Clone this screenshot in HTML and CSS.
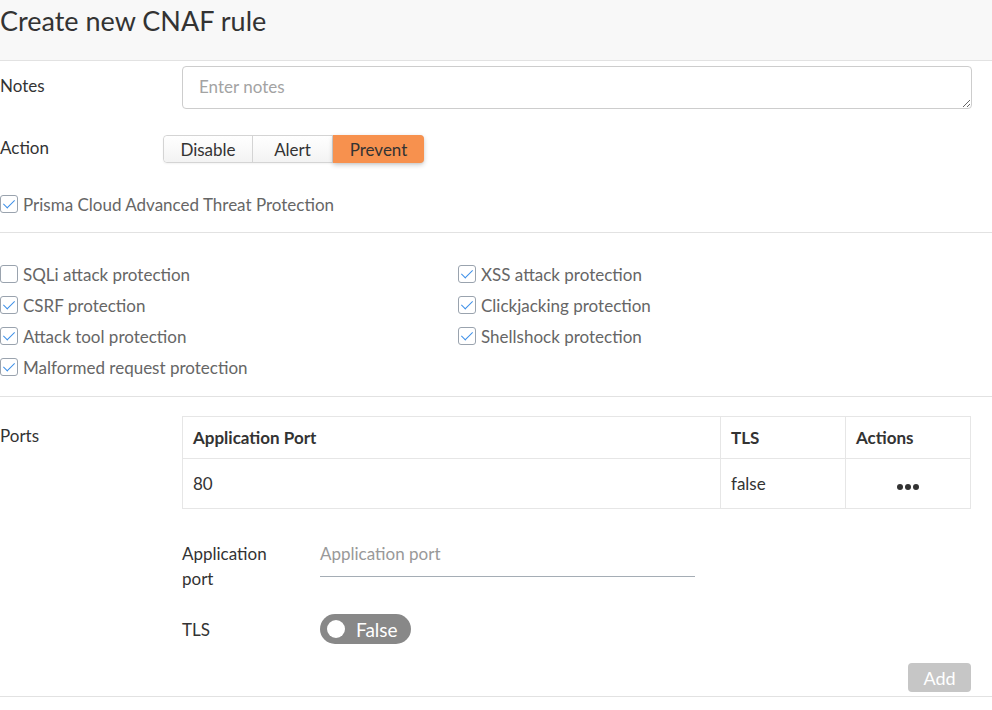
FILE: index.html
```html
<!DOCTYPE html>
<html>
<head>
<meta charset="utf-8">
<link rel="stylesheet" href="styles.css">
</head>
<body>
<div class="header"><h1 class="title">Create new CNAF rule</h1></div>

<div class="row row-notes">
  <div class="label">Notes</div>
  <div class="field"><textarea class="notes" placeholder="Enter notes"></textarea></div>
</div>

<div class="row row-action">
  <div class="label label-action">Action</div>
  <div class="btn-group">
    <span class="seg">Disable</span><span class="seg">Alert</span><span class="seg seg-active">Prevent</span>
  </div>
</div>

<div class="check-line check-prisma">
  <span class="cb on"></span><span class="cb-text">Prisma Cloud Advanced Threat Protection</span>
</div>

<div class="divider"></div>

<div class="check-grid">
  <div class="check-line"><span class="cb"></span><span class="cb-text">SQLi attack protection</span></div>
  <div class="check-line"><span class="cb on"></span><span class="cb-text">XSS attack protection</span></div>
  <div class="check-line"><span class="cb on"></span><span class="cb-text">CSRF protection</span></div>
  <div class="check-line"><span class="cb on"></span><span class="cb-text">Clickjacking protection</span></div>
  <div class="check-line"><span class="cb on"></span><span class="cb-text">Attack tool protection</span></div>
  <div class="check-line"><span class="cb on"></span><span class="cb-text">Shellshock protection</span></div>
  <div class="check-line"><span class="cb on"></span><span class="cb-text">Malformed request protection</span></div>
</div>

<div class="divider"></div>

<div class="ports">
  <div class="label label-ports">Ports</div>
  <div class="ports-body">
    <table class="ports-table">
      <thead>
        <tr><th class="c1">Application Port</th><th class="c2">TLS</th><th class="c3">Actions</th></tr>
      </thead>
      <tbody>
        <tr><td>80</td><td>false</td><td class="dots"><span></span><span></span><span></span></td></tr>
      </tbody>
    </table>

    <div class="sub-row sub-port">
      <div class="sub-label">Application<br>port</div>
      <div class="port-input"><span class="ph">Application port</span></div>
    </div>
    <div class="sub-row sub-tls">
      <div class="sub-label">TLS</div>
      <div class="toggle"><span class="knob"></span><span class="toggle-text">False</span></div>
    </div>
    <div class="add-row"><span class="add-btn">Add</span></div>
  </div>
</div>
<div class="divider last"></div>
</body>
</html>
```

FILE: styles.css
```css
html, body {
  margin: 0;
  padding: 0;
  background: #fff;
  font-family: Lato, "Open Sans", sans-serif;
  color: #333;
}
.header {
  height: 60px;
  background: #f8f8f8;
  border-bottom: 1px solid #e2e2e2;
  overflow: hidden;
}
.title {
  margin: 0;
  padding-top: 5px;
  font-size: 27px;
  font-weight: 400;
  color: #333;
  line-height: 32px;
}
.row {
  display: flex;
  align-items: flex-start;
}
.label {
  width: 182px;
  font-size: 17px;
  line-height: 20px;
  color: #333;
}
.row-notes {
  padding-top: 5px;
}
.row-notes .label {
  padding-top: 10px;
}
.field {
  width: 790px;
}
.notes {
  display: block;
  box-sizing: border-box;
  width: 790px;
  height: 43px;
  margin: 0;
  padding: 10px 16px;
  border: 1px solid #cdcdcd;
  border-radius: 4px;
  font-family: Lato, sans-serif;
  font-size: 17px;
  line-height: 20px;
  color: #333;
  resize: vertical;
}
.notes::placeholder {
  color: #a3a3a3;
}
.row-action {
  margin-top: 26px;
  align-items: center;
}
.label-action {
  width: 163px;
  margin-top: -2px;
}
.btn-group {
  display: flex;
  height: 28px;
  border-radius: 4px;
  border: 1px solid #d4d4d4;
  box-sizing: border-box;
  box-shadow: 0 1px 2px rgba(0,0,0,0.05);
}
.seg {
  display: flex;
  align-items: center;
  justify-content: center;
  font-size: 17px;
  color: #333;
  background: linear-gradient(#fff, #f3f3f3);
  border-right: 1px solid #d4d4d4;
}
.seg:nth-child(1) { width: 88px; border-radius: 4px 0 0 4px; }
.seg:nth-child(2) { width: 79px; }
.seg-active {
  width: 91px;
  border-right: 0;
  margin: -1px -1px -1px 0;
  border-radius: 0 4px 4px 0;
  background: #f7914e;
  box-shadow: 0 2px 5px rgba(0,0,0,0.2);
  color: #333;
}
.check-line {
  display: flex;
  align-items: center;
  height: 20px;
}
.check-prisma {
  margin-top: 31px;
}
.cb {
  box-sizing: border-box;
  width: 18px;
  height: 18px;
  border: 1px solid #9aa3ae;
  border-radius: 3px;
  margin-right: 5px;
  position: relative;
  flex: none;
}
.cb.on::after {
  content: "";
  position: absolute;
  left: 5px;
  top: 1px;
  width: 5px;
  height: 10px;
  border: solid #3d8fe8;
  border-width: 0 1.5px 1.5px 0;
  transform: rotate(45deg);
}
.cb-text {
  font-size: 17px;
  color: #666;
}
.divider {
  height: 1px;
  background: #e2e2e2;
  margin-top: 18px;
}
.check-grid {
  display: grid;
  grid-template-columns: 458px 1fr;
  row-gap: 11px;
  padding-top: 31px;
}
.check-grid .check-line {
  height: 20px;
}
.check-grid + .divider {
  margin-top: 19px;
}
.ports {
  display: flex;
  padding-top: 19px;
}
.label-ports {
  padding-top: 10px;
}
.ports-body {
  width: 789px;
}
.ports-table {
  width: 789px;
  border-collapse: collapse;
  font-size: 17px;
}
.ports-table th, .ports-table td {
  border: 1px solid #e6e6e6;
  text-align: left;
  padding: 0 10px;
}
.ports-table th {
  height: 41px;
  font-weight: 700;
  color: #333;
}
.ports-table td {
  height: 49px;
  color: #333;
}
.c1 { width: 517px; }
.c2 { width: 104px; }
.ports-table td.dots {
  text-align: center;
}
.dots span {
  display: inline-block;
  width: 6px;
  height: 6px;
  border-radius: 50%;
  background: #333;
  margin: 0 1px;
}
.sub-row {
  display: flex;
}
.sub-label {
  width: 138px;
  font-size: 17px;
  line-height: 25px;
  color: #333;
}
.sub-port {
  margin-top: 32px;
}
.port-input {
  width: 375px;
  height: 36px;
  border-bottom: 1px solid #a5adb5;
  box-sizing: border-box;
  font-size: 17px;
  line-height: 25px;
}
.ph {
  color: #999;
}
.sub-tls {
  margin-top: 23px;
  align-items: center;
}
.toggle {
  display: flex;
  align-items: center;
  width: 91px;
  height: 30px;
  border-radius: 15px;
  background: #888;
  box-sizing: border-box;
  padding-left: 7px;
}
.knob {
  width: 18px;
  height: 18px;
  border-radius: 50%;
  background: #fff;
  margin-right: 11px;
}
.toggle-text {
  color: #fff;
  font-size: 19px;
}
.add-row {
  display: flex;
  justify-content: flex-end;
  margin-top: 19px;
}
.add-btn {
  width: 63px;
  height: 29px;
  border-radius: 4px;
  background: #c6c6c6;
  color: #fff;
  font-size: 18px;
  display: flex;
  align-items: center;
  justify-content: center;
}
.divider.last {
  margin-top: 4px;
}
```
